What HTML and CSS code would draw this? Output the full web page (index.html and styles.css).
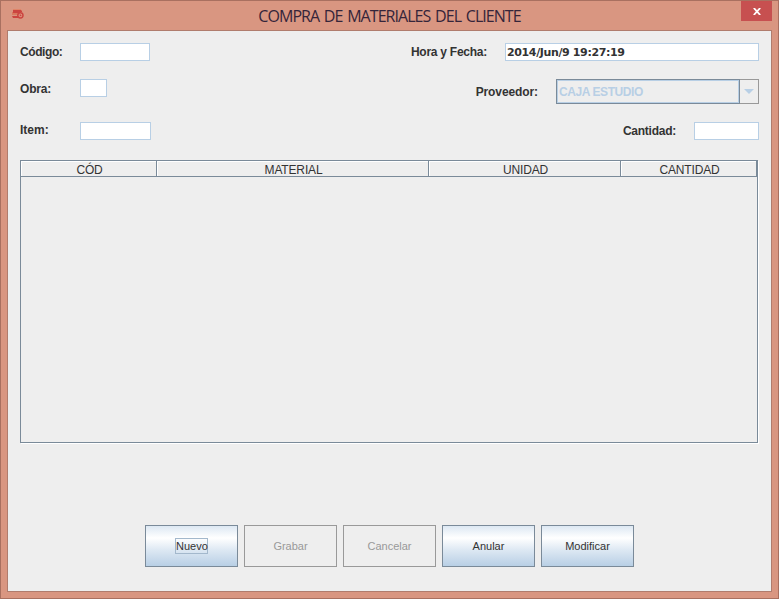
FILE: index.html
```
<!DOCTYPE html>
<html lang="es">
<head>
<meta charset="utf-8">
<title>COMPRA DE MATERIALES DEL CLIENTE</title>
<link rel="stylesheet" href="styles.css">
</head>
<body>
<div class="window">
  <header class="titlebar">
    <svg class="app-icon" width="12" height="11" viewBox="0 0 12 11">
      <path d="M1 0h8v1H1z" fill="#e08468"/>
      <path d="M1 1h8l1 1v1H1z" fill="#cb4540"/>
      <path d="M0 3h9v3H0z" fill="#d9795d"/>
      <path d="M1 3h7v1H1z" fill="#cb4540"/>
      <path d="M0 7h8v2H1z" fill="#cb4540"/>
      <circle cx="8.4" cy="6.3" r="2.6" fill="#e09a84" stroke="#cb4540" stroke-width="1.5"/>
      <path d="M7.7 4.9v2.8L9.8 6.3z" fill="#cb4540"/>
    </svg>
    <h1 class="title">COMPRA DE MATERIALES DEL CLIENTE</h1>
    <button class="close" aria-label="Cerrar">
      <svg width="8" height="7" viewBox="0 0 8 7"><path d="M.8 0 7.2 7M7.2 0 .8 7" stroke="#fff" stroke-width="1.8"/></svg>
    </button>
  </header>
  <main class="content">
    <div class="row row-code">
      <label class="label code-label">Código:</label><span class="field code"></span>
      <label class="label end date-label">Hora y Fecha:</label><span class="field date">2014/Jun/9 19:27:19</span>
    </div>
    <div class="row row-obra">
      <label class="label obra-label">Obra:</label><span class="field obra"></span>
      <label class="label end provider-label">Proveedor:</label>
      <div class="combo"><span class="combo-value">CAJA ESTUDIO</span><span class="combo-arrow"><svg width="10" height="5" viewBox="0 0 10 5"><path d="M0 0h10L5 5z" fill="#b8cfe5"/></svg></span></div>
    </div>
    <div class="row row-item">
      <label class="label item-label">Item:</label><span class="field item"></span>
      <label class="label end amount-label">Cantidad:</label><span class="field amount"></span>
    </div>
    <div class="table">
      <div class="table-head">
        <span class="th">CÓD</span><span class="th">MATERIAL</span><span class="th">UNIDAD</span><span class="th">CANTIDAD</span>
      </div>
    </div>
    <div class="actions">
      <button class="btn"><span class="focus">Nuevo</span></button>
      <button class="btn" disabled>Grabar</button>
      <button class="btn" disabled>Cancelar</button>
      <button class="btn">Anular</button>
      <button class="btn">Modificar</button>
    </div>
  </main>
</div>
</body>
</html>
```
FILE: styles.css
```
* { box-sizing: border-box; }
body { margin: 0; font-family: "Liberation Sans", Arial, sans-serif; color: #333; }
button { font-family: inherit; padding: 0; border-radius: 0; }
.window { width: 779px; height: 599px; border: 1px solid #a97060; background: #d99681; padding: 0 6px 6px; display: flex; flex-direction: column; }
.titlebar { height: 29px; display: flex; align-items: flex-start; padding-left: 5px; }
.app-icon { margin-top: 8px; }
.title { flex: 1; margin: 0; padding-left: 14px; text-align: center; font: 400 16px/30px "Open Sans", sans-serif; letter-spacing: -0.95px; word-spacing: 1.5px; color: #35253a; white-space: nowrap; }
.close { width: 31px; height: 20px; border: 0; background: #c75050; display: flex; align-items: center; justify-content: center; padding-top: 1px; }
.content { flex: 1; border: 1px solid #b07c6d; background: #eee; padding: 12px 12px 0; display: flex; flex-direction: column; }
.row { display: flex; align-items: flex-start; }
.row-code { height: 36px; }
.row-obra { height: 43px; }
.row-item { height: 38px; }
.label { font-weight: 700; font-size: 12px; line-height: 18px; width: 60px; white-space: nowrap; }
.label.end { width: auto; margin-left: auto; }
.code-label { letter-spacing: -0.42px; }
.obra-label { line-height: 20px; letter-spacing: -0.2px; }
.item-label { line-height: 16px; }
.date-label { margin-right: 18px; letter-spacing: -0.25px; }
.provider-label { margin-right: 18px; line-height: 26px; letter-spacing: -0.1px; }
.amount-label { margin-right: 18px; letter-spacing: -0.25px; }
.field { height: 18px; border: 1px solid #b8cfe5; background: #fff; }
.code { width: 70px; }
.obra { width: 27px; }
.item { width: 71px; }
.amount { width: 65px; }
.date { width: 254px; padding-left: 1px; font: 700 11px/17px "DejaVu Sans", sans-serif; letter-spacing: -0.37px; white-space: nowrap; }
.combo { width: 203px; height: 25px; display: flex; }
.combo-value { width: 184px; border: 1px solid #7a8a99; box-shadow: inset 0 0 0 1px #b8cfe5; padding-left: 2px; font-weight: 700; font-size: 12px; line-height: 24px; letter-spacing: -0.42px; color: #b8cfe5; white-space: nowrap; }
.combo-arrow { flex: 1; border: 1px solid #999; border-left: 0; display: flex; align-items: center; justify-content: center; }
.table { height: 283px; margin-right: 1px; border: 1px solid #7a8a99; box-shadow: 1px 1px #fff; }
.table-head { display: grid; grid-template: 16px / 136px 272px 192px 136px; }
.th { border: solid #7a8a99; border-width: 0 1px 1px 0; box-shadow: inset 1px 1px #fff; padding-left: 2px; font-size: 12px; line-height: 18px; letter-spacing: -0.15px; text-align: center; }
.actions { display: flex; gap: 6px; margin: 82px 0 0 125px; }
.btn { width: 93px; height: 42px; border: 1px solid #7a8a99; background: linear-gradient(#dde8f3, #fff 30%, #dde8f3 60%, #b8cfe5); font-size: 11px; line-height: 14px; color: #333; }
.btn:disabled { border-color: #999; background: #eee; color: #999; }
.focus { display: inline-block; border: 1px solid #a3b8cc; height: 16px; width: 33px; }
```
